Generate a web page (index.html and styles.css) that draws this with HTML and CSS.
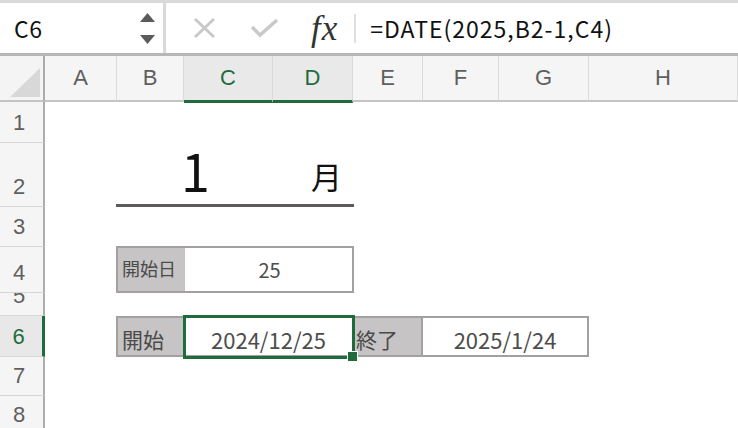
FILE: index.html
```html
<!DOCTYPE html>
<html lang="ja">
<head>
<meta charset="utf-8">
<title>Sheet</title>
<link rel="stylesheet" href="styles.css">
</head>
<body>
<div class="app">
  <div class="fbar">
    <div class="namebox">
      <span class="ref">C6</span>
      <div class="spin">
        <svg width="15" height="9" viewBox="0 0 15 9"><polygon points="7.5,0 15,9 0,9" fill="#5b5b5b"/></svg>
        <svg width="15" height="9" viewBox="0 0 15 9"><polygon points="0,0 15,0 7.5,9" fill="#5b5b5b"/></svg>
      </div>
    </div>
    <div class="formula">
      <svg class="ic-x" width="23" height="22" viewBox="0 0 23 22"><path d="M2 2 L21 20 M21 2 L2 20" stroke="#c9c9c9" stroke-width="3" fill="none"/></svg>
      <svg class="ic-ok" width="29" height="20" viewBox="0 0 29 20"><polyline points="2,9 10,17 27,2" stroke="#c9c9c9" stroke-width="3.5" fill="none"/></svg>
      <span class="fx">fx</span>
      <span class="fsep"></span>
      <span class="ftext">=DATE(2025,B2-1,C4)</span>
    </div>
  </div>

  <div class="sheet">
    <div class="corner"><svg width="30" height="29" viewBox="0 0 30 29"><polygon points="30,0 30,29 0,29" fill="#d8d8d8"/></svg></div>
    <div class="ch">A</div>
    <div class="ch">B</div>
    <div class="ch sel">C</div>
    <div class="ch sel">D</div>
    <div class="ch">E</div>
    <div class="ch">F</div>
    <div class="ch">G</div>
    <div class="ch">H</div>

    <div class="title">
      <div class="t-num">1</div>
      <div class="t-unit">月</div>
    </div>

    <div class="box4">
      <div class="lbl lbl-sm">開始日</div>
      <div class="val val-sm">25</div>
    </div>

    <div class="box6">
      <div class="lbl">開始</div>
      <div class="val">2024/12/25</div>
      <div class="lbl lbl-sep">終了</div>
      <div class="val">2025/1/24</div>
    </div>

    <div class="selframe"><span class="handle"></span></div>

    <div class="rh">1</div>
    <div class="rh">2</div>
    <div class="rh">3</div>
    <div class="rh">4</div>
    <div class="rh">5</div>
    <div class="rh sel">6</div>
    <div class="rh">7</div>
    <div class="rh">8</div>
  </div>
</div>
</body>
</html>
```

FILE: styles.css
```css
* { box-sizing: border-box; }

body {
  margin: 0;
  background: #ffffff;
  font-family: "Liberation Sans", Arial, sans-serif;
}

.app {
  width: 738px;
  height: 428px;
  overflow: hidden;
  background: #ffffff;
}

/* formula bar */
.fbar {
  display: flex;
  gap: 3px;
  height: 56px;
  padding-top: 3px;
  background: #d9d9d9;
  border-bottom: 3px solid #b7b7b7;
}

.namebox {
  width: 163px;
  flex: none;
  background: #ffffff;
  display: flex;
  align-items: center;
  padding: 0 8px 0 14px;
}

.ref {
  font-family: "Noto Sans CJK JP", "Liberation Sans", sans-serif;
  font-size: 23px;
  letter-spacing: 0.5px;
  color: #111111;
}

.spin {
  margin-left: auto;
  height: 31px;
  display: flex;
  flex-direction: column;
  justify-content: space-between;
}

.spin svg { display: block; }

.formula {
  flex: 1;
  background: #ffffff;
  display: flex;
  align-items: center;
}

.ic-x { margin-left: 27px; display: block; }
.ic-ok { margin-left: 34px; display: block; }

.fx {
  margin-left: 32px;
  font-family: "Liberation Serif", "Times New Roman", serif;
  font-style: italic;
  font-size: 35px;
  letter-spacing: 1px;
  color: #333333;
  line-height: 1;
}

.fsep {
  margin-left: 16px;
  width: 2px;
  height: 29px;
  background: #e0e0e0;
}

.ftext {
  margin-left: 14px;
  font-family: "Noto Sans CJK JP", "Liberation Sans", sans-serif;
  font-size: 23px;
  letter-spacing: 1px;
  color: #111111;
}

/* sheet grid */
.sheet {
  display: grid;
  grid-template-columns: 45px 72px 67px 89px 80px 70px 76px 90px 149px;
  grid-template-rows: 46px 41px 64px 40px 46px 23px 41px 39px 39px;
}

.corner {
  background: #f4f4f4;
  border-right: 2px solid #ababab;
  border-bottom: 2px solid #c4c4c4;
  display: flex;
  align-items: flex-end;
  justify-content: flex-end;
  padding: 0 3px 3px 0;
}

.corner svg { display: block; }

.ch {
  background: #f5f5f5;
  border-right: 1px solid #dadada;
  border-bottom: 2px solid #c4c4c4;
  display: flex;
  align-items: center;
  justify-content: center;
  font-size: 22px;
  color: #5f5f5f;
}

.ch.sel {
  background: #e9e9e9;
  color: #1f6b3c;
  border-bottom: 3px solid #1f6b3b;
  margin-bottom: -1px;
}

.rh {
  grid-column: 1;
  background: #f5f5f5;
  border-right: 2px solid #adadad;
  border-bottom: 1px solid #d6d6d6;
  display: flex;
  align-items: flex-end;
  justify-content: center;
  padding: 0 5px 8px 0;
  font-size: 22px;
  line-height: 22px;
  color: #5f5f5f;
  overflow: hidden;
}

.rh.sel {
  background: #e8e8e8;
  color: #1f6b3c;
  border-right: 3px solid #1f6b3b;
}

/* cells */
.title {
  grid-column: 3 / 6;
  grid-row: 3;
  display: grid;
  grid-template-columns: 156px 1fr;
  border-bottom: 3px solid #5e5a5a;
  margin: 0 -1px 0 -1px;
  font-family: "Noto Sans CJK JP", sans-serif;
  color: #111111;
}

.t-num {
  align-self: end;
  text-align: center;
  font-size: 52px;
  line-height: 52px;
  padding: 0 0 8px 3px;
}

.t-unit {
  align-self: end;
  text-align: right;
  font-size: 31px;
  line-height: 31px;
  padding: 0 12px 13px 0;
}

.box4 {
  grid-column: 3 / 6;
  grid-row: 5;
  display: grid;
  grid-template-columns: 67px 1fr;
  border: 2px solid #a3a0a0;
  margin: -1px -1px 0 -1px;
}

.box6 {
  grid-column: 3 / 9;
  grid-row: 7;
  display: grid;
  grid-template-columns: 66px 169px 70px 1fr;
  border: 2px solid #a3a0a0;
  margin: 0 0 0 -1px;
}

.lbl {
  background: #c6c4c4;
  display: flex;
  align-items: center;
  padding: 5px 0 0 4px;
  font-family: "Noto Sans CJK JP", sans-serif;
  font-size: 21px;
  color: #4a4a4a;
}

.lbl-sm {
  font-size: 18px;
  padding: 0 0 4px 4px;
}

.lbl-sep {
  border-right: 2px solid #a3a0a0;
  padding-left: 3px;
}

.val {
  display: flex;
  align-items: center;
  justify-content: center;
  padding-top: 5px;
  font-family: "Noto Sans CJK JP", sans-serif;
  font-size: 22px;
  color: #4d4d4d;
}

.val-sm {
  font-size: 20px;
  padding-top: 0;
  padding-left: 2px;
}

.selframe {
  grid-column: 4 / 6;
  grid-row: 7;
  border: 3px solid #1f6b3b;
  margin: -1px -2px -2px -1px;
  position: relative;
  z-index: 2;
}

.handle {
  position: absolute;
  right: -6px;
  bottom: -6px;
  width: 11px;
  height: 11px;
  background: #1f6b3b;
  border: 1px solid #ffffff;
}
```
